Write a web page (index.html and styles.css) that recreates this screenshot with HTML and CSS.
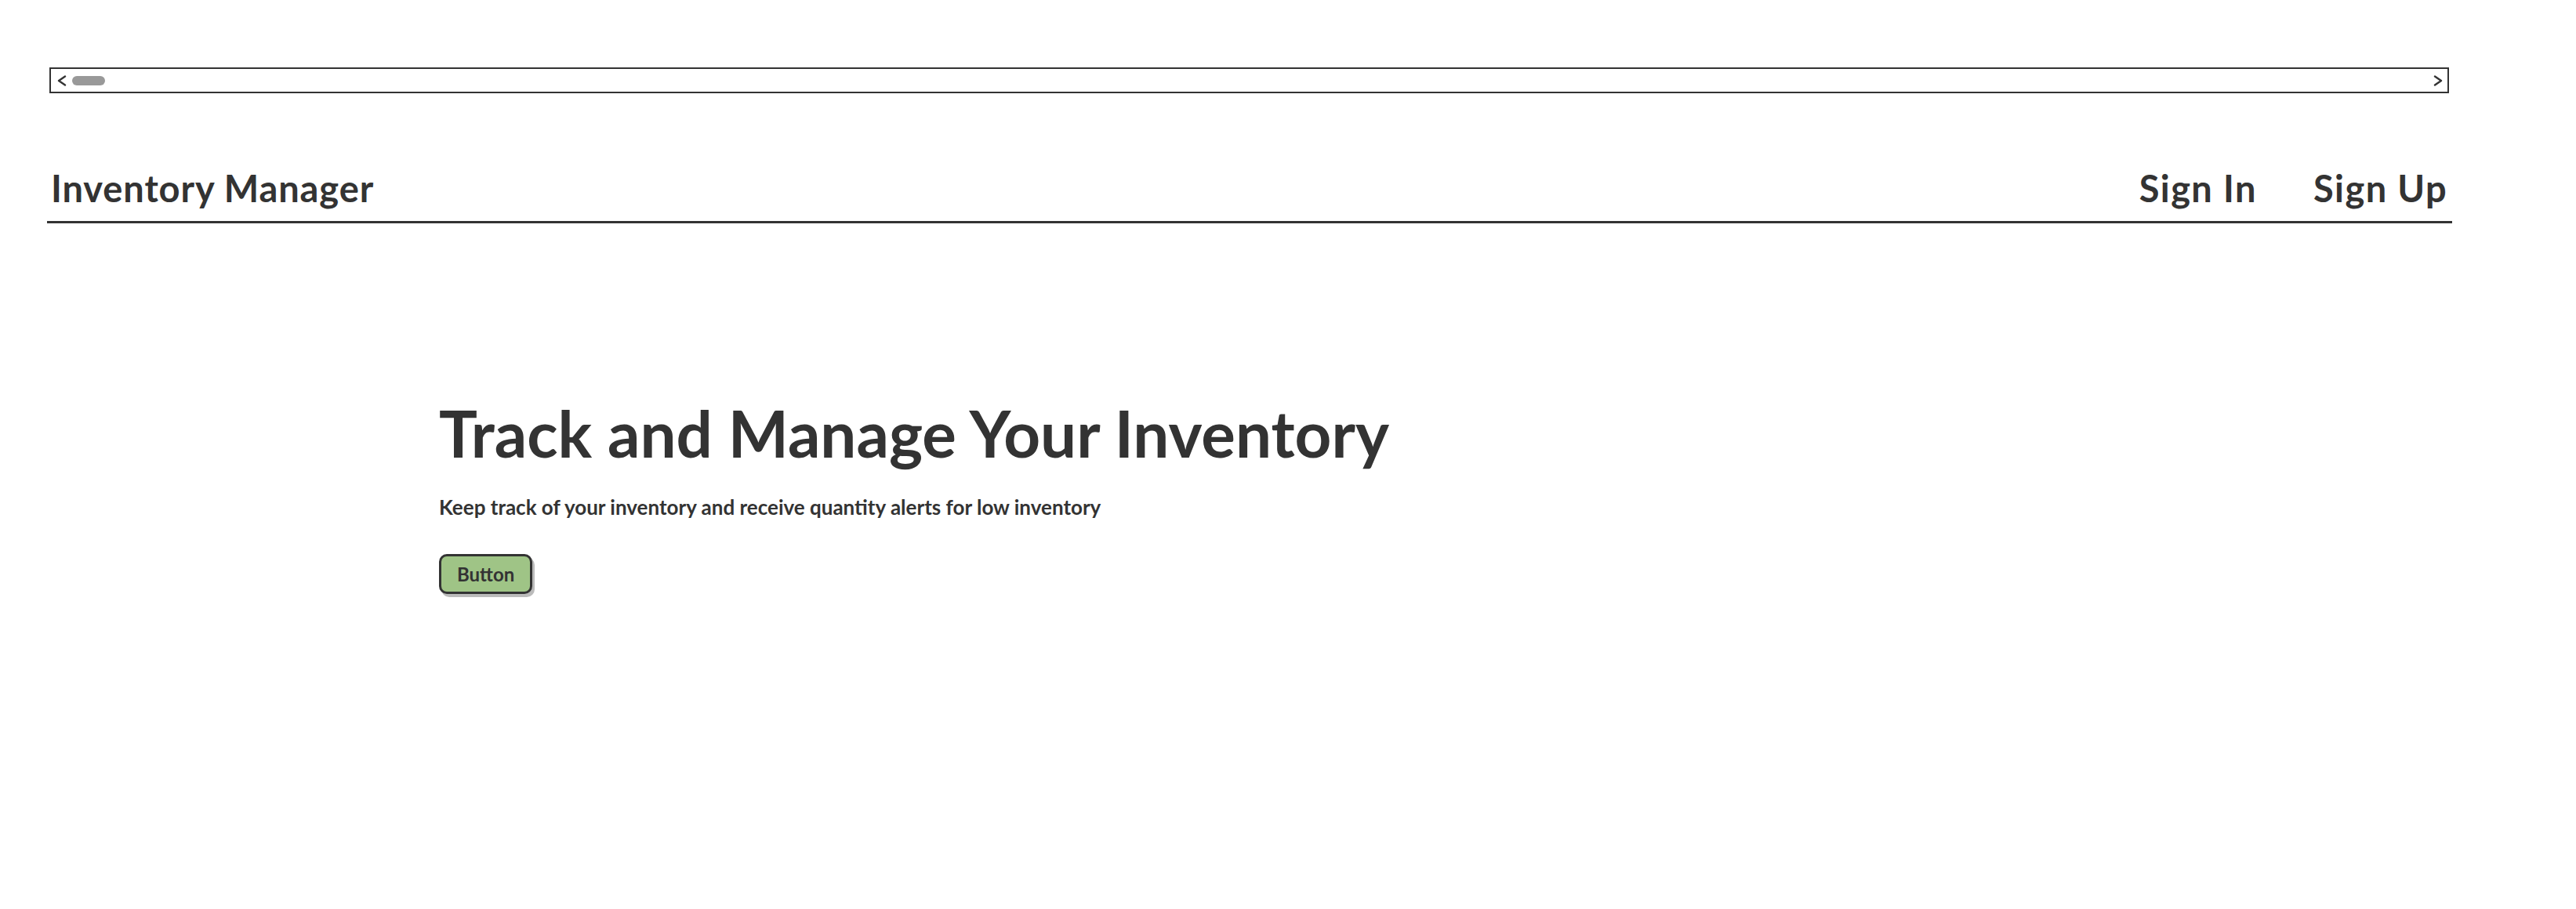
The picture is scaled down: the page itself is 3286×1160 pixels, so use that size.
FILE: index.html
```html
<!DOCTYPE html>
<html>
<head>
<meta charset="utf-8">
<link rel="stylesheet" href="styles.css">
</head>
<body>
<div class="page">
  <div class="scrollbar">
    <svg class="chev" width="12" height="14" viewBox="0 0 12 14"><polyline points="10,1.5 2,7 10,12.5" fill="none" stroke="#333" stroke-width="2.4" stroke-linecap="round" stroke-linejoin="round"/></svg>
    <span class="thumb"></span>
    <span class="spacer"></span>
    <svg class="chev" width="12" height="14" viewBox="0 0 12 14"><polyline points="2,1.5 10,7 2,12.5" fill="none" stroke="#333" stroke-width="2.4" stroke-linecap="round" stroke-linejoin="round"/></svg>
  </div>
  <header class="topbar">
    <div class="brand">Inventory Manager</div>
    <nav class="nav">
      <a class="nav-link">Sign In</a>
      <a class="nav-link">Sign Up</a>
    </nav>
  </header>
  <main class="hero">
    <h1 class="hero-title">Track and Manage Your Inventory</h1>
    <p class="hero-sub">Keep track of your inventory and receive quantity alerts for low inventory</p>
    <button class="btn">Button</button>
  </main>
</div>
</body>
</html>
```

FILE: styles.css
```css
html, body {
  margin: 0;
  padding: 0;
  background: #ffffff;
}
body {
  font-family: "Lato", "Open Sans", sans-serif;
  color: #333333;
}
.page {
  width: 3286px;
  height: 1160px;
  padding: 86px 0 0 60px;
  box-sizing: border-box;
}
.scrollbar {
  margin-left: 3px;
  width: 3061px;
  height: 33px;
  box-sizing: border-box;
  border: 2px solid #333;
  display: flex;
  align-items: center;
  padding: 0 6px 0 8px;
  gap: 7px;
}
.chev {
  display: block;
}
.thumb {
  width: 42px;
  height: 12px;
  border-radius: 6px;
  background: #999;
}
.spacer {
  flex: 1;
}
.topbar {
  margin-top: 93px;
  width: 3068px;
  display: flex;
  justify-content: space-between;
  align-items: flex-end;
  border-bottom: 3px solid #333;
  padding: 0 6px 14px 5px;
  box-sizing: border-box;
}
.brand {
  font-size: 47px;
  line-height: 1.2;
  font-weight: 700;
  letter-spacing: 0.9px;
}
.nav {
  display: flex;
  gap: 72px;
}
.nav-link {
  font-size: 47px;
  line-height: 1.2;
  font-weight: 700;
  letter-spacing: 1.4px;
}
.hero {
  margin-left: 500px;
  padding-top: 218px;
}
.hero-title {
  margin: 0;
  font-size: 81.7px;
  line-height: 1.2;
  font-weight: 700;
}
.hero-sub {
  margin: 31px 0 0 0;
  font-size: 26px;
  line-height: 1.2;
  font-weight: 700;
}
.btn {
  display: block;
  margin-top: 43px;
  font-family: inherit;
  font-size: 24px;
  font-weight: 700;
  color: #333;
  background: #9fc486;
  border: 3px solid #333;
  border-radius: 10px;
  padding: 8px 20px;
  box-shadow: 3px 4px 0 #bbbbbb;
}
```
